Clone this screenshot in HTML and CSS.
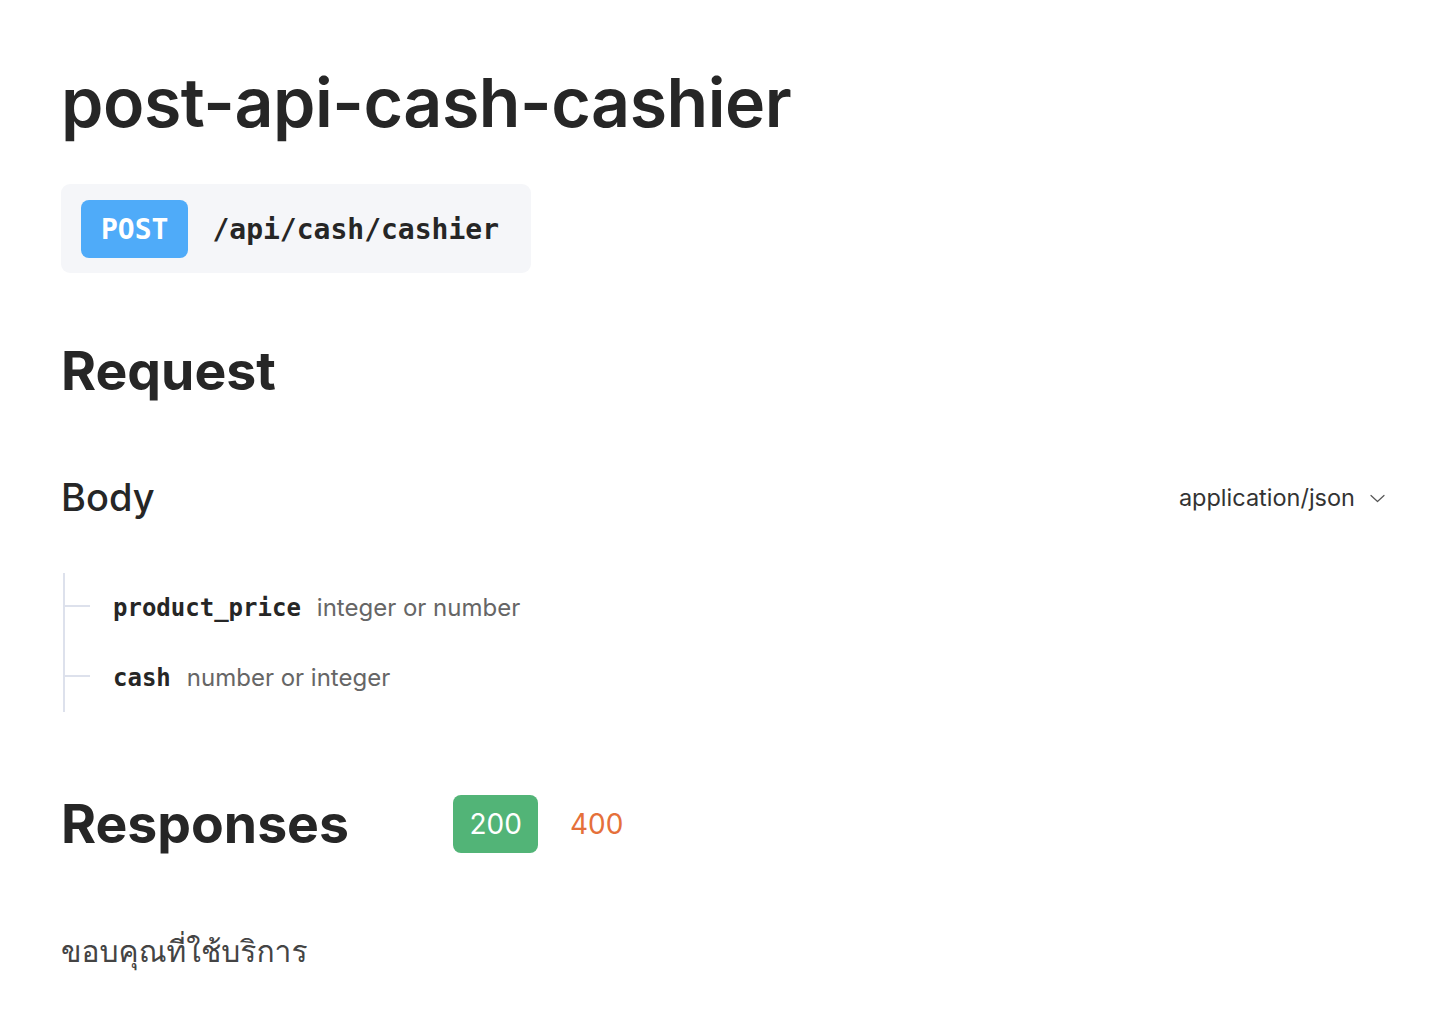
FILE: index.html
```html
<!DOCTYPE html>
<html lang="en">
<head>
<meta charset="utf-8">
<title>post-api-cash-cashier</title>
<link rel="stylesheet" href="styles.css">
</head>
<body>
<main class="page">
  <h1 class="title">post-api-cash-cashier</h1>
  <div class="endpoint">
    <span class="method">POST</span>
    <span class="path">/api/cash/cashier</span>
  </div>

  <h2 class="section">Request</h2>

  <div class="body-head">
    <h3 class="sub">Body</h3>
    <button class="mime">application/json
      <svg class="chev" width="15" height="9" viewBox="0 0 15 9"><path d="M1 1.5l6.5 6 6.5-6" fill="none" stroke="#555" stroke-width="1.2" stroke-linecap="round" stroke-linejoin="round"/></svg>
    </button>
  </div>

  <div class="tree">
    <div class="prop"><span class="name">product_price</span><span class="type">integer or number</span></div>
    <div class="prop"><span class="name">cash</span><span class="type">number or integer</span></div>
  </div>

  <div class="resp-head">
    <h2 class="section">Responses</h2>
    <div class="codes">
      <span class="code active">200</span>
      <span class="code err">400</span>
    </div>
  </div>

  <p class="desc">ขอบคุณที่ใช้บริการ</p>
</main>
</body>
</html>
```

FILE: styles.css
```css
html, body {
  margin: 0;
  padding: 0;
  background: #ffffff;
}
.page {
  padding: 62px 61px 0 61px;
  font-family: Inter, "Noto Sans", sans-serif;
  color: #262626;
}
.title {
  margin: 0;
  font-size: 68px;
  line-height: 80px;
  font-weight: 600;
  letter-spacing: -0.45px;
}
.endpoint {
  display: inline-flex;
  align-items: center;
  gap: 24px;
  margin-top: 42px;
  padding: 16px 32px 15px 20px;
  background: #f5f6f9;
  border-radius: 9px;
}
.method {
  display: inline-flex;
  align-items: center;
  height: 58px;
  padding: 0 20px;
  background: #4fabf9;
  color: #ffffff;
  border-radius: 8px;
  font-family: "DejaVu Sans Mono", monospace;
  font-weight: 700;
  font-size: 28px;
}
.path {
  font-family: "DejaVu Sans Mono", monospace;
  font-weight: 700;
  font-size: 28px;
  color: #262626;
}
.section {
  margin: 0;
  font-size: 53.5px;
  line-height: 64px;
  font-weight: 700;
}
.page > .section {
  margin-top: 66px;
}
.body-head {
  display: flex;
  align-items: center;
  justify-content: space-between;
  margin-top: 70px;
  padding-right: 4px;
}
.sub {
  margin: 0;
  font-size: 38px;
  line-height: 48px;
  font-weight: 500;
}
.mime {
  display: inline-flex;
  align-items: center;
  gap: 15px;
  border: 0;
  background: none;
  padding: 0;
  font-family: Inter, sans-serif;
  font-size: 23.5px;
  color: #333333;
}
.chev {
  margin-top: 3px;
}
.tree {
  margin-top: 52px;
  margin-left: 2px;
  border-left: 2px solid #dde1ec;
  padding: 18px 0 17px 0;
  display: flex;
  flex-direction: column;
  gap: 36px;
}
.prop {
  display: flex;
  align-items: baseline;
  gap: 16px;
  padding-left: 48px;
  position: relative;
  line-height: 34px;
}
.prop::before {
  content: "";
  position: absolute;
  left: 0;
  top: 14px;
  width: 25px;
  height: 2px;
  background: #dde1ec;
}
.name {
  font-family: "DejaVu Sans Mono", monospace;
  font-weight: 700;
  font-size: 24px;
  color: #262626;
}
.type {
  font-size: 24px;
  color: #666666;
}
.resp-head {
  display: flex;
  align-items: center;
  gap: 104px;
  margin-top: 80px;
}
.codes {
  display: flex;
  align-items: center;
  gap: 15px;
}
.code {
  display: inline-flex;
  align-items: center;
  justify-content: center;
  height: 58px;
  padding: 0 16.5px;
  border-radius: 8px;
  font-size: 28px;
}
.code.active {
  background: #52b477;
  color: #ffffff;
}
.code.err {
  color: #e5703a;
}
.desc {
  margin: 72px 0 0 0;
  font-family: "Loma", "Garuda", "Noto Sans Thai Looped", "Tlwg Typo", "Kinnari", "Noto Sans Thai", "Noto Sans", sans-serif;
  font-size: 30px;
  color: #444444;
}
```
